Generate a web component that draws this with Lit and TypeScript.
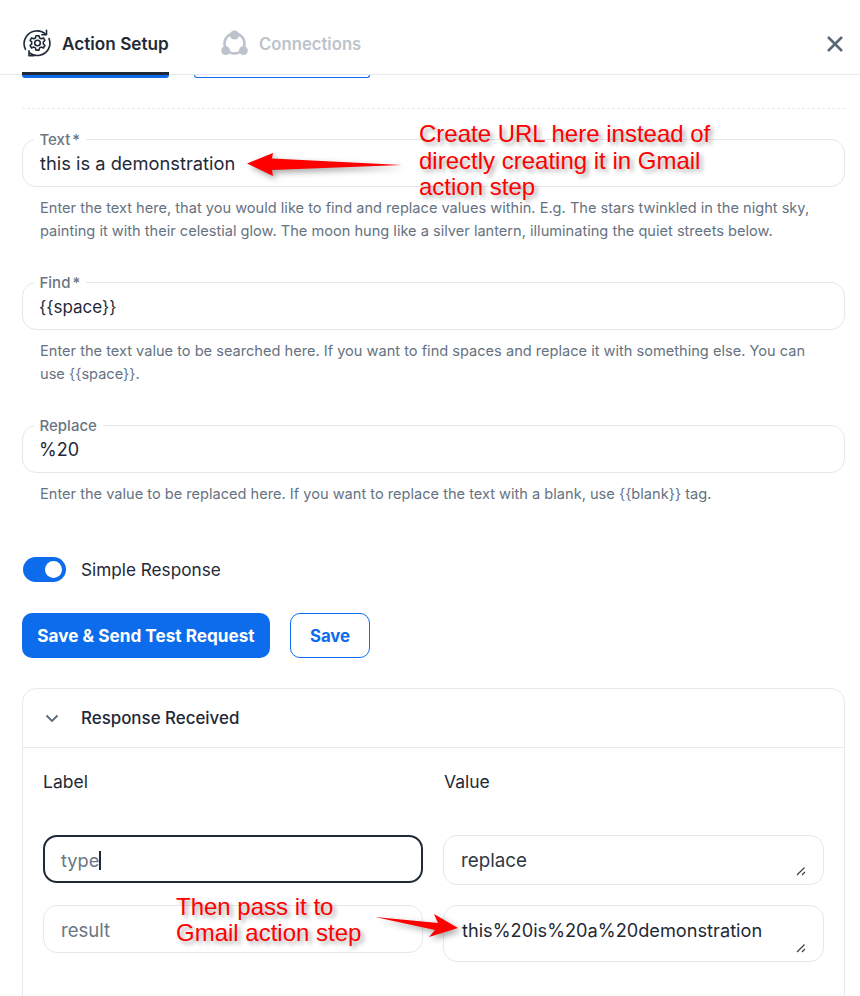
import { LitElement, html, css } from "lit";
import { customElement } from "lit/decorators.js";

@customElement("app-root")
export class AppRoot extends LitElement {
  static styles = css`
    :host { display: block; position: relative; width: 860px; height: 996px; overflow: hidden; background: #fff; font-family: "Inter", "Noto Sans", sans-serif; color: #1f2937; }
    * { box-sizing: border-box; }
    header { height: 75px; border-bottom: 1px solid #e7eaee; display: flex; align-items: stretch; padding: 0 16px 0 22px; position: relative; z-index: 1; }
    .tab { display: flex; align-items: center; gap: 11px; font-size: 17.2px; font-weight: 600; letter-spacing: 0; padding-top: 15px; height: 75px; border-bottom: 3px solid transparent; }
    .tab.active { width: 147px; color: #1f2937; border-bottom-color: #1f2937; gap: 10px; }
    .tab.active svg { margin-left: 1px; }
    .tab.off { margin-left: 52px; color: #bcc3cc; font-size: 16.7px; }
    .close { margin-left: auto; align-self: center; margin-top: 13px; display: flex; }
    .stub { height: 3px; display: flex; gap: 25px; padding-left: 22px; overflow: hidden; }
    .stub .a { width: 147px; height: 3px; background: #0d6ceb; border-radius: 0 0 7px 7px; }
    .stub .b { width: 176px; height: 3px; border: 1px solid #0d6ceb; border-top: 0; border-radius: 0 0 7px 7px; }
    main { padding: 0 15px 0 22px; }
    .dash { margin-top: 30px; border-top: 1px dashed #e7eaee; height: 1px; }
    .field { position: relative; margin-top: 30px; }
    .field + .field { margin-top: 40px; }
    .box { height: 48px; border: 1px solid #e5e7eb; border-radius: 14px; padding: 0 17px; display: flex; align-items: center; font-size: 18.3px; color: #1f2937; padding-top: 1px; }
    .box.first { padding-top: 0; }
    .box.narrow { font-size: 17px; padding-left: 16px; }
    .box.pct { font-size: 18px; padding-left: 16px; }
    .lbl { position: absolute; left: 11.5px; top: -8px; background: #fff; padding: 0 6px; font-size: 15px; line-height: 18px; font-weight: 500; color: #6b7682; word-spacing: -2px; }
    .help { margin: 10px 0 -1px 18px; width: 790px; font-size: 14.6px; line-height: 23px; color: #66727f; }
    .toggle-row { display: flex; align-items: center; gap: 15px; margin-top: 52px; font-size: 17.2px; padding-left: 1px; }
    .toggle { width: 43px; height: 25px; border-radius: 13px; background: #0d6ceb; position: relative; }
    .toggle i { position: absolute; right: 4px; top: 4px; width: 17px; height: 17px; border-radius: 50%; background: #fff; }
    .btns { display: flex; gap: 20px; margin-top: 31px; }
    .btn { height: 45px; border-radius: 10px; display: flex; align-items: center; justify-content: center; font-weight: 700; }
    .btn.p { width: 248px; background: #0d6ceb; color: #fff; font-size: 17.2px; }
    .btn.s { width: 80px; border: 1px solid #0d6ceb; color: #0d6ceb; font-size: 16.8px; }
    .card { margin-top: 30px; width: 823px; height: 340px; border: 1px solid #e7eaee; border-radius: 14px 14px 0 0; }
    .card-h { height: 59px; border-bottom: 1px solid #e7eaee; display: flex; align-items: center; gap: 21px; padding-left: 21px; font-size: 16.9px; font-weight: 500; }
    .grid { display: grid; grid-template-columns: 380px 381px; column-gap: 20px; padding: 0 20px; }
    .th { font-size: 17.5px; height: 87px; padding-top: 23px; font-weight: 400; }
    .th.v { padding-left: 1px; }
    .cell { border: 1px solid #e5e7eb; border-radius: 14px; padding: 0 17px; font-size: 18.2px; display: flex; align-items: flex-start; position: relative; margin-bottom: 20px; color: #1f2937; }
    .cell.c1 { height: 50px; padding-top: 13px; color: #2f3844; font-size: 18.8px; }
    .cell.c2 { height: 57px; padding-top: 13px; padding-left: 18px; margin-bottom: 0; }
    .cell.in { height: 48px; padding-top: 13px; color: #6b7785; font-size: 18.6px; }
    .cell.focus { border: 2px solid #1f2937; padding-left: 16px; padding-top: 12px; font-size: 18.2px; }
    .caret { display: inline-block; width: 1.5px; height: 19px; background: #1f2937; vertical-align: -3px; }
    .grip { position: absolute; right: 17px; bottom: 8px; display: flex; }
    .note { position: absolute; font-family: "Liberation Sans", Arial, sans-serif; font-size: 24px; line-height: 26.7px; color: #f00; text-shadow: 3px 3px 4px rgba(0,0,0,.35); white-space: nowrap; z-index: 3; }
    .n1 { left: 419px; top: 121px; }
    .n2 { left: 176px; top: 893.5px; }
    .arrow { position: absolute; left: 0; top: 0; z-index: 2; filter: drop-shadow(3px 3px 3px rgba(0,0,0,.35)); pointer-events: none; }
  `;

  grip() {
    return html`<svg class="grip" width="10" height="10" viewBox="0 0 10 10" fill="none" stroke="#3a3f46" stroke-width="1.2"><path d="M1 9 8.500 1.500M6 9l3-3"/></svg>`;
  }

  render() {
    return html`
      <header>
        <div class="tab active">
          <svg width="29" height="29" viewBox="0 0 29 29" fill="none" stroke="#1f2937" stroke-width="1.6" stroke-linecap="round" stroke-linejoin="round">
            <path d="M13 6.800h3l.6 2.200 1.700.8 2.100-.9 1.500 2.500-1.600 1.600v1.900l1.600 1.600-1.500 2.500-2.100-.9-1.700.8-.6 2.200h-3l-.6-2.200-1.700-.8-2.100.9-1.500-2.500 1.600-1.600V13l-1.600-1.600 1.500-2.500 2.100.9 1.700-.8z"/>
            <circle cx="14.500" cy="14" r="2.800"/>
            <path d="M23 5.500A13 13 0 0 0 3.300 7.500 13 13 0 0 0 2.500 20.500"/>
            <path d="M26 9.500A13 13 0 0 1 25.500 20 13 13 0 0 1 6.500 24"/>
            <path d="M23.500 1.200v4.600h-4.600M6 21.800v5h4.800"/>
          </svg>
          Action Setup
        </div>
        <div class="tab off">
          <svg width="27" height="27" viewBox="0 0 27 27" fill="none">
            <circle cx="13.500" cy="13.500" r="10" stroke="#bcc3cc" stroke-width="2.600"/>
            <circle cx="13.500" cy="5" r="4.600" fill="#bcc3cc"/>
            <circle cx="4.600" cy="20.600" r="4.400" fill="#bcc3cc"/>
            <circle cx="22.400" cy="20.600" r="4.400" fill="#bcc3cc"/>
          </svg>
          Connections
        </div>
        <div class="close">
          <svg width="18" height="18" viewBox="0 0 18 18" fill="none" stroke="#5b6875" stroke-width="2.600"><path d="M2 2l14 14M16 2 2 16"/></svg>
        </div>
      </header>
      <div class="stub"><div class="a"></div><div class="b"></div></div>
      <main>
        <div class="dash"></div>
        <div class="field">
          <div class="box first">this is a demonstration</div>
          <div class="lbl">Text *</div>
          <div class="help">Enter the text here, that you would like to find and replace values within. E.g. The stars twinkled in the night sky, painting it with their celestial glow. The moon hung like a silver lantern, illuminating the quiet streets below.</div>
        </div>
        <div class="field">
          <div class="box narrow">{{space}}</div>
          <div class="lbl">Find *</div>
          <div class="help">Enter the text value to be searched here. If you want to find spaces and replace it with something else. You can use {{space}}.</div>
        </div>
        <div class="field">
          <div class="box pct">%20</div>
          <div class="lbl">Replace</div>
          <div class="help">Enter the value to be replaced here. If you want to replace the text with a blank, use {{blank}} tag.</div>
        </div>
        <div class="toggle-row"><div class="toggle"><i></i></div>Simple Response</div>
        <div class="btns"><div class="btn p">Save &amp; Send Test Request</div><div class="btn s">Save</div></div>
        <div class="card">
          <div class="card-h">
            <svg width="16" height="16" viewBox="0 0 16 16" fill="none" stroke="#5b6875" stroke-width="1.800"><path d="M2.500 5.500 8 11l5.500-5.500"/></svg>
            Response Received
          </div>
          <div class="grid">
            <div class="th">Label</div><div class="th v">Value</div>
            <div class="cell in focus"><span>type<span class="caret"></span></span></div>
            <div class="cell c1">replace${this.grip()}</div>
            <div class="cell in">result</div>
            <div class="cell c2">this%20is%20a%20demonstration${this.grip()}</div>
          </div>
        </div>
      </main>
      <div class="note n1">Create URL here instead of<br>directly creating it in Gmail<br>action step</div>
      <div class="note n2">Then pass it to<br>Gmail action step</div>
      <svg class="arrow" width="860" height="996" viewBox="0 0 860 996">
        <path fill="#f00" d="M247 163.500 273 153 272 158.500 402 165 272 170 273 176Z"/>
        <path fill="#f00" d="M458 928 434 914 438 923 375 917 435 930 429 937Z"/>
      </svg>
    `;
  }
}
